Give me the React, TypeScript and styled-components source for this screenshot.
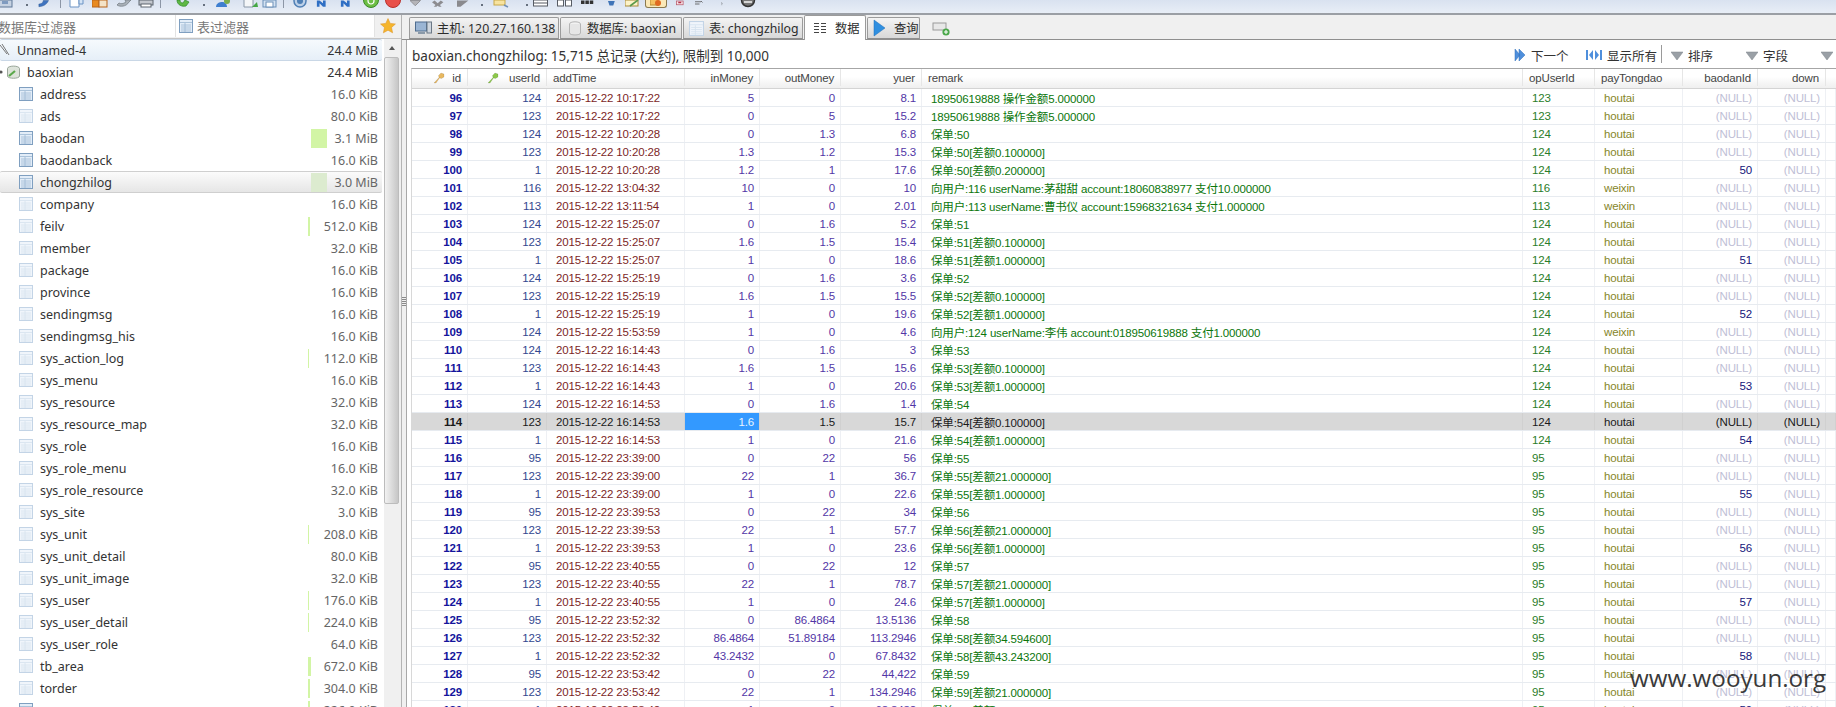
import React from "react";
import styled, { createGlobalStyle } from "styled-components";

const UI = `"Noto Sans", "Noto Sans CJK SC", sans-serif`;
const GRID = `"Liberation Sans", "Noto Sans CJK SC", sans-serif`;

const Global = createGlobalStyle`
  html, body { margin: 0; padding: 0; width: 1836px; height: 707px; overflow: hidden; background: #f0f0f0; }
  #root { width: 1836px; height: 707px; }
  * { box-sizing: border-box; }
`;

const Page = styled.div`
  position: relative;
  width: 1836px;
  height: 707px;
  overflow: hidden;
  display: flex;
  flex-direction: column;
  background: #f0f0f0;
  color: #333;
`;

/* ---------- toolbar ---------- */
const Toolbar = styled.div`
  flex: 0 0 15px;
  display: flex;
  align-items: flex-start;
  overflow: hidden;
  background: linear-gradient(#d9e2f0, #e8eef7);
  border-bottom: 2px solid #9b9fa5;
`;
const ToolSlot = styled.div<{ $gap: number; $w: number }>`
  flex: 0 0 ${(p) => p.$w}px;
  width: ${(p) => p.$w}px;
  margin-left: ${(p) => p.$gap}px;
  height: 8px;
  display: flex;
  align-items: flex-end;
  justify-content: center;
`;
const ToolSep = styled.div`
  width: 1px;
  height: 8px;
  background: #8c96a6;
`;
const ToolDot = styled.div`
  width: 2px;
  height: 2px;
  margin-bottom: 2px;
  background: #66707e;
`;
const ActiveTool = styled.div`
  width: 22px;
  height: 9px;
  display: flex;
  justify-content: center;
  align-items: flex-end;
  background: #fbe9b8;
  border: 1px solid #8a7a50;
  border-top: 0;
  border-radius: 0 0 3px 3px;
`;

type Kind =
  | "box" | "leaf" | "doc" | "book" | "arrows" | "print" | "swirl" | "people" | "docgo" | "save" | "ring"
  | "nav" | "green" | "red" | "check" | "x" | "garrow" | "yellow" | "tbl" | "split" | "small" | "blue"
  | "pencil" | "warn" | "ox" | "lines" | "q" | "dark";

const ToolGlyph = ({ kind }: { kind: Kind }) => {
  const p: Record<Kind, React.ReactNode> = {
    box: <><rect x="1" y="0" width="13" height="7" fill="#c6d2e2" stroke="#5f7898" /><rect x="4" y="1" width="6" height="3" fill="#7f9bc0" /></>,
    leaf: <path d="M1 7 C5 7 10 5 12 0 L6 0 C6 3 3 4 1 4 Z" fill="#3f74c0" stroke="#2a558f" strokeWidth=".5" />,
    doc: <><path d="M1 0 V7 H10 V0" fill="#fff" stroke="#6b93c4" /><path d="M10 0 V4 H14 V0" fill="#d3e3f5" stroke="#6b93c4" /></>,
    book: <><rect x="0" y="0" width="7" height="7" fill="#e88a20" stroke="#b8651a" /><rect x="7" y="0" width="8" height="7" fill="#f4e3c8" stroke="#b8651a" /></>,
    arrows: <path d="M1 5 C4 7 10 7 13 2 L15 0 H9 L10 2 C7 4 5 4 3 3 Z" fill="#a9b0b8" stroke="#707880" strokeWidth=".7" />,
    print: <><rect x="1" y="0" width="14" height="5" fill="#c3c7ce" stroke="#5d646e" /><rect x="3" y="4" width="10" height="3" fill="#fff" stroke="#5d646e" /></>,
    swirl: <path d="M1 0 C1 5 6 7 10 6 L13 2 L9 0 L7 3 C5 3 4 2 4 0 Z" fill="#5fb845" stroke="#2f8a2a" strokeWidth=".7" />,
    people: <><path d="M1 7 C1 3 5 2 7 2 C10 2 12 4 12 7 Z" fill="#3f7fd0" /><circle cx="12" cy="1" r="3" fill="#7cae4c" /></>,
    docgo: <><path d="M1 0 V7 H10 V0" fill="#f4f6f8" stroke="#8a98a8" /><path d="M9 7 L14 2 L15 7 Z" fill="#46a846" /></>,
    save: <><rect x="1" y="0" width="13" height="7" fill="#d4e2f2" stroke="#6b8fb8" /><rect x="4" y="2" width="7" height="5" fill="#fff" stroke="#6b8fb8" /></>,
    ring: <><circle cx="8" cy="1" r="6" fill="#bcd0e8" stroke="#4f7fb5" strokeWidth="1.5" /><circle cx="8" cy="1" r="3" fill="#4f7fb5" /></>,
    nav: <path d="M1 0 V7 H4 V3 L8 7 H11 V0 H8 V3 L4 0 Z" fill="#2f6fc4" />,
    green: <><circle cx="8" cy="0" r="7.5" fill="#6cbe45" stroke="#3b8a28" /><circle cx="8" cy="1" r="3" fill="none" stroke="#fff" strokeWidth="1.2" /></>,
    red: <circle cx="8" cy="0" r="7.5" fill="#e8504a" stroke="#b8302c" />,
    check: <path d="M0 0 H12 L6 6 Z" fill="#b4b4b8" stroke="#8c8c90" />,
    x: <path d="M0 2 L3 0 L6.5 3 L10 0 L13 2 L9 5 L11 7 H8 L6.5 6 L5 7 H2 L4 5 Z" fill="#8c8c90" />,
    garrow: <path d="M0 0 H13 L4 7 H0 Z" fill="#8a8a8e" />,
    yellow: <><rect x="1" y="0" width="11" height="5" fill="#f7e3a0" stroke="#c8a848" /><path d="M11 5 L15 7" stroke="#7090b8" strokeWidth="1.4" /></>,
    tbl: <><rect x=".5" y="0" width="14" height="6" fill="#fff" stroke="#565b63" /><path d="M1 3 H14" stroke="#565b63" /></>,
    split: <><rect x=".5" y="0" width="6" height="6" fill="#fff" stroke="#565b63" /><rect x="8.5" y="0" width="6" height="6" fill="#fff" stroke="#565b63" /></>,
    small: <><rect x="0" y="0" width="4" height="4" fill="#333" /><rect x="5" y="0" width="4" height="4" fill="#333" /><rect x="10" y="0" width="4" height="4" fill="#333" /></>,
    blue: <path d="M0 0 H9 L7 6 H2 Z" fill="#3f74b8" />,
    pencil: <><rect x="0" y="0" width="13" height="6" fill="#fdf3c8" stroke="#a88a3a" /><path d="M5 6 L13 0" stroke="#5a9a4a" strokeWidth="1.6" /></>,
    warn: <><rect x="1" y="0" width="8" height="5" fill="#f4c060" /><circle cx="10" cy="2" r="3" fill="#e06a20" /></>,
    ox: <><rect x=".5" y="0" width="9" height="5" fill="#f8e4e8" stroke="#b85a6a" /><rect x="3" y="1" width="4" height="2" fill="#b0304a" /></>,
    lines: <path d="M0 1 H8 M0 4 H6 M8 0 L10 2" stroke="#555" strokeWidth="1.1" fill="none" />,
    q: <path d="M1 0 C3 1 3 3 2 4 V5 M2 6 V7" stroke="#444" strokeWidth="1.4" fill="none" />,
    dark: <><circle cx="8" cy="0" r="6.5" fill="#777" stroke="#333" strokeWidth="1.5" /><path d="M4 2 L12 2" stroke="#fff" strokeWidth="1.4" /></>,
  };
  return <svg width="16" height="8" viewBox="0 0 16 8">{p[kind]}</svg>;
};

type ToolItem = { x: number; w: number; kind: Kind | "sep" | "dot" | "active" };
const tools: ToolItem[] = [
  { x: -2, w: 16, kind: "box" }, { x: 26, w: 2, kind: "dot" }, { x: 38, w: 14, kind: "leaf" }, { x: 60, w: 1, kind: "sep" },
  { x: 69, w: 16, kind: "doc" }, { x: 92, w: 16, kind: "book" }, { x: 116, w: 16, kind: "arrows" }, { x: 138, w: 16, kind: "print" },
  { x: 160, w: 1, kind: "sep" }, { x: 176, w: 16, kind: "swirl" }, { x: 203, w: 2, kind: "dot" }, { x: 215, w: 16, kind: "people" },
  { x: 243, w: 16, kind: "docgo" }, { x: 262, w: 16, kind: "save" }, { x: 283, w: 1, kind: "sep" }, { x: 292, w: 16, kind: "ring" },
  { x: 316, w: 14, kind: "nav" }, { x: 340, w: 14, kind: "nav" }, { x: 363, w: 16, kind: "green" }, { x: 385, w: 16, kind: "red" },
  { x: 410, w: 14, kind: "check" }, { x: 432, w: 14, kind: "x" }, { x: 457, w: 14, kind: "garrow" }, { x: 481, w: 2, kind: "dot" },
  { x: 493, w: 16, kind: "yellow" }, { x: 526, w: 2, kind: "dot" }, { x: 533, w: 16, kind: "tbl" }, { x: 557, w: 16, kind: "split" },
  { x: 581, w: 14, kind: "small" }, { x: 608, w: 12, kind: "blue" }, { x: 625, w: 16, kind: "pencil" }, { x: 645, w: 22, kind: "active" },
  { x: 676, w: 12, kind: "ox" }, { x: 695, w: 12, kind: "lines" }, { x: 721, w: 6, kind: "q" }, { x: 740, w: 16, kind: "dark" },
];

const ToolIcon = ({ kind }: { kind: ToolItem["kind"] }) => {
  if (kind === "sep") return <ToolSep />;
  if (kind === "dot") return <ToolDot />;
  if (kind === "active") return <ActiveTool><svg width="12" height="8" viewBox="0 0 12 8"><rect x="0" y="0" width="8" height="6" fill="#f4c060" stroke="#b88a30" /><circle cx="8" cy="4" r="3" fill="#e06a20" /></svg></ActiveTool>;
  return <ToolGlyph kind={kind} />;
};

/* ---------- shared icons ---------- */
const TableIcon = ({ open, size = 14 }: { open?: boolean; size?: number }) => {
  const line = open ? "#7f9fc0" : "#c3d4e6";
  const rule = open ? "#9db7d2" : "#d5e2ef";
  const fill = open ? "#e3edf8" : "#f0f5fb";
  return (
    <svg width={size} height={size} viewBox="0 0 14 14" style={{ flex: "none" }}>
      <rect x=".5" y=".5" width="13" height="13" fill={fill} stroke={line} />
      <path d="M1 3.5 H13 M2 6 H12 M2 8 H12 M2 10 H12 M2 12 H12 M6 4 V13" stroke={rule} strokeWidth=".8" fill="none" />
    </svg>
  );
};

const Star = () => (
  <svg width="16" height="16" viewBox="0 0 16 16">
    <path d="M8 .6 L10.2 5.4 L15.4 6 L11.5 9.5 L12.6 14.8 L8 12.2 L3.4 14.8 L4.5 9.5 L.6 6 L5.8 5.4 Z" fill="#f5b52c" stroke="#e0992a" strokeWidth=".6" />
  </svg>
);

const KeyIcon = ({ color }: { color: string }) => (
  <svg width="12" height="12" viewBox="0 0 12 12">
    <path d="M1 11 L6 5.5 L5.5 3.5 L8 1 L11 2 L11 5 L8.5 6.5 L6.5 6 L3 11 Z" fill={color} stroke="#00000030" strokeWidth=".5" />
  </svg>
);

/* ---------- main ---------- */
const Main = styled.div`
  flex: 1;
  min-height: 0;
  display: flex;
`;
const LeftPanel = styled.aside`
  flex: 0 0 401px;
  display: flex;
  flex-direction: column;
  border-right: 1px solid #b4b4b4;
  min-height: 0;
`;
const FilterBar = styled.div`
  flex: 0 0 22px;
  display: flex;
  font: 13px ${UI};
  color: #777;
`;
const FilterBox = styled.div<{ $w: number }>`
  flex: 0 0 ${(p) => p.$w}px;
  display: flex;
  align-items: center;
  gap: 4px;
  padding-left: 3px;
  background: #fff;
  overflow: hidden;
  border-right: 1px solid #e3e3e3;
`;
const FilterCut = styled.span`
  margin-left: -5px;
  white-space: nowrap;
`;
const StarBox = styled.div`
  flex: 1;
  display: flex;
  align-items: center;
  padding-left: 5px;
`;
const TreeArea = styled.div`
  flex: 1;
  min-height: 0;
  display: flex;
  margin-top: 1px;
  padding-right: 2px;
  border-top: 1px solid #c4c4c4;
`;
const Tree = styled.div`
  flex: 0 0 384px;
  background: #fff;
  overflow: hidden;
  padding-right: 2px;
`;
const TreeRow = styled.div<{ $state?: "conn" | "sel"; $indent: number }>`
  height: 22px;
  display: flex;
  align-items: center;
  padding: 0 4px 0 ${(p) => p.$indent}px;
  font: 12.5px ${UI};
  color: #333;
  border: 1px solid transparent;
  border-width: 1px 0;
  border-radius: 2px;
  ${(p) => p.$state === "conn" && `background: linear-gradient(#f6fafd, #e6eff8); border-color: #c9d7e6;`}
  ${(p) => p.$state === "sel" && `background: linear-gradient(#fbfbfb, #e6e6e6); border-color: #cfcfcf;`}
`;
const TreeName = styled.span`
  flex: 1;
  margin-left: 7px;
  white-space: nowrap;
`;
const BarSlot = styled.div`
  flex: 0 0 16px;
  height: 19px;
  display: flex;
`;
const Bar = styled.div<{ $pale?: boolean }>`
  height: 100%;
  background: ${(p) => (p.$pale ? "#dcebcf" : "#d2f5a5")};
`;
const SizeText = styled.span<{ $dark?: boolean }>`
  flex: 0 0 51px;
  text-align: right;
  white-space: nowrap;
  color: ${(p) => (p.$dark ? "#333" : "#666")};
`;
const Scrollbar = styled.div`
  flex: 0 0 15px;
  display: flex;
  flex-direction: column;
  background: #f0f0f0;
`;
const ScrollUp = styled.div`
  flex: 0 0 18px;
  display: flex;
  align-items: center;
  justify-content: center;
  &::before {
    content: "";
    border: 3px solid transparent;
    border-bottom: 4px solid #555;
    border-top: 0;
  }
`;
const ScrollThumb = styled.div`
  flex: 0 0 447px;
  background: linear-gradient(90deg, #f2f2f2, #dcdcdc 50%, #c6c6c6);
  border: 1px solid #bcbcbc;
  border-radius: 2px;
`;
const Splitter = styled.div`
  flex: 0 0 4px;
  display: flex;
  align-items: center;
  justify-content: center;
  padding-bottom: 120px;
  &::before {
    content: "";
    width: 4px;
    height: 9px;
    background: repeating-linear-gradient(#8a8a8a 0 1px, #f0f0f0 1px 2px);
  }
`;

const RightPanel = styled.main`
  flex: 1;
  min-width: 0;
  display: flex;
  flex-direction: column;
  border-left: 1px solid #a8a8a8;
`;
const TabBar = styled.div`
  flex: 0 0 25px;
  display: flex;
  align-items: flex-end;
  gap: 1px;
  margin-left: -5px;
  padding-left: 7px;
  background: #f0f0f0;
  border-bottom: 1px solid #8f8f8f;
  position: relative;
  z-index: 1;
`;
const Tab = styled.div<{ $active?: boolean; $w: number }>`
  flex: 0 0 ${(p) => p.$w}px;
  min-width: 0;
  overflow: hidden;
  height: ${(p) => (p.$active ? "25px" : "22px")};
  margin-bottom: ${(p) => (p.$active ? "-1px" : "0")};
  display: flex;
  align-items: center;
  gap: 5px;
  padding-left: 5px;
  font: 12.3px ${UI};
  color: #2c2c2c;
  white-space: nowrap;
  border: 1px solid #9b9b9b;
  border-bottom: ${(p) => (p.$active ? "0" : "1px solid #8f8f8f")};
  border-radius: 2px 2px 0 0;
  background: ${(p) => (p.$active ? "#fff" : "linear-gradient(#f4f4f4, #d8d8d8)")};
`;
const AddTab = styled.div`
  margin-left: 11px;
  align-self: center;
  margin-top: 4px;
  display: flex;
`;
const Body = styled.div`
  flex: 1;
  min-height: 0;
  display: flex;
  flex-direction: column;
  background: #fff;
  padding-left: 4px;
`;
const InfoRow = styled.div`
  flex: 0 0 28px;
  display: flex;
  align-items: center;
  font: 13.5px ${UI};
  color: #333;
  white-space: nowrap;
  padding-left: 1px;
`;
const InfoText = styled.span`
  flex: 1;
  padding-top: 2px;
`;
const Actions = styled.div`
  display: flex;
  align-items: center;
  font-size: 12.5px;
  height: 100%;
`;
const Action = styled.div<{ $w: number }>`
  flex: 0 0 ${(p) => p.$w}px;
  display: flex;
  align-items: center;
  gap: 5px;
  padding-top: 2px;
`;
const ActionSep = styled.div`
  width: 1px;
  height: 18px;
  background: #9a9a9a;
  margin: 0 9px 0 0;
`;

const NextIcon = () => (
  <svg width="12" height="14" viewBox="0 0 12 14"><path d="M1 1 L6 7 L1 13 Z M5 1 L11 7 L5 13 Z" fill="#4f8fdc" stroke="#2f6fb8" strokeWidth=".5" /></svg>
);
const AllIcon = () => (
  <svg width="16" height="12" viewBox="0 0 16 12"><path d="M0 1 H2 V11 H0 Z M7 1 L3 6 L7 11 Z M9 1 L13 6 L9 11 Z M14 1 H16 V11 H14 Z" fill="#4f8fdc" /></svg>
);
const DropIcon = () => (
  <svg width="12" height="9" viewBox="0 0 12 9"><path d="M0 1 H12 L6 9 Z" fill="#9aa0a6" stroke="#7f858b" strokeWidth=".5" /></svg>
);

const cols = "57px 79px 138px 75px 81px 81px 601px 72px 88px 75px 68px 1fr";
const Table = styled.div`
  flex: 1;
  min-height: 0;
  overflow: hidden;
  border-top: 1px solid #a6a6a6;
  border-left: 1px solid #d8d8d8;
  font: 11.5px ${GRID};
  letter-spacing: -0.15px;
`;
const HeadRow = styled.div`
  display: grid;
  grid-template-columns: ${cols};
  height: 20px;
  background: linear-gradient(#fff, #fff 40%, #efefef);
  border-bottom: 1px solid #d4d4d4;
  margin-left: -1px;
  padding-bottom: 2px;
`;
const HeadCell = styled.div<{ $right?: boolean }>`
  display: flex;
  align-items: center;
  justify-content: ${(p) => (p.$right ? "flex-end" : "flex-start")};
  gap: 7px;
  padding: 0 6px;
  color: #444;
  border-right: 1px solid #e6e6e6;
  white-space: nowrap;
`;
const HeadKey = styled.span`
  display: flex;
  margin-right: 3px;
`;
const Row = styled.div<{ $sel?: boolean }>`
  display: grid;
  grid-template-columns: ${cols};
  height: 18px;
  margin-left: -1px;
  border-bottom: 1px solid #e7ebf0;
  background: ${(p) => (p.$sel ? "#d8d8d8" : "#fff")};
`;
type Tone = "id" | "user" | "date" | "num" | "text" | "op" | "pay" | "ref" | "null";
const toneColor: Record<Tone, string> = {
  id: "#14149c",
  user: "#33478f",
  date: "#7c1f1f",
  num: "#5236a6",
  text: "#0b760b",
  op: "#2a7d2a",
  pay: "#86862a",
  ref: "#14147a",
  null: "#c0c0d6",
};
const Cell = styled.div<{ $tone: Tone; $sel?: boolean; $focus?: boolean; $right?: boolean }>`
  display: flex;
  align-items: center;
  justify-content: ${(p) => (p.$right ? "flex-end" : "flex-start")};
  padding: ${(p) => (p.$right ? "0 5px 0 0" : "0 0 0 9px")};
  border-right: 1px solid ${(p) => (p.$sel ? "#d0d0d0" : "#eef0f4")};
  white-space: nowrap;
  overflow: hidden;
  font-weight: ${(p) => (p.$tone === "id" ? 700 : 400)};
  color: ${(p) => (p.$focus ? "#e8f4ff" : p.$sel ? "#1a1a1a" : toneColor[p.$tone])};
  background: ${(p) => (p.$focus ? "#3399ff" : "transparent")};
`;

const Watermark = styled.div`
  position: absolute;
  left: 1630px;
  top: 663px;
  font: 24.2px "Open Sans", sans-serif;
  line-height: 30px;
  color: #3a3a3a;
  white-space: nowrap;
`;

/* ---------- data ---------- */
const treeRows: [string, string, number?, boolean?][] = [
  ["address", "16.0 KiB", 0, true], ["ads", "80.0 KiB"], ["baodan", "3.1 MiB", 16, true], ["baodanback", "16.0 KiB", 0, true],
  ["chongzhilog", "3.0 MiB", 16, true], ["company", "16.0 KiB"], ["feilv", "512.0 KiB", 2], ["member", "32.0 KiB"],
  ["package", "16.0 KiB"], ["province", "16.0 KiB"], ["sendingmsg", "16.0 KiB"], ["sendingmsg_his", "16.0 KiB"],
  ["sys_action_log", "112.0 KiB", 1], ["sys_menu", "16.0 KiB"], ["sys_resource", "32.0 KiB"], ["sys_resource_map", "32.0 KiB"],
  ["sys_role", "16.0 KiB"], ["sys_role_menu", "16.0 KiB"], ["sys_role_resource", "32.0 KiB"], ["sys_site", "3.0 KiB"],
  ["sys_unit", "208.0 KiB", 1], ["sys_unit_detail", "80.0 KiB"], ["sys_unit_image", "32.0 KiB"], ["sys_user", "176.0 KiB", 1],
  ["sys_user_detail", "224.0 KiB", 1], ["sys_user_role", "64.0 KiB"], ["tb_area", "672.0 KiB", 3], ["torder", "304.0 KiB", 2],
  ["", "326.0 KiB", 2, true],
];

const D = "2015-12-22 ";
const pay = (n: number, d: string) => `保单:${n}[差额${d}]`;
type R = [number, number, string, string, string, string, string, number, string, number | null];
const rows: R[] = [
  [96, 124, "10:17:22", "5", "0", "8.1", "18950619888 操作金额5.000000", 123, "houtai", null],
  [97, 123, "10:17:22", "0", "5", "15.2", "18950619888 操作金额5.000000", 123, "houtai", null],
  [98, 124, "10:20:28", "0", "1.3", "6.8", "保单:50", 124, "houtai", null],
  [99, 123, "10:20:28", "1.3", "1.2", "15.3", pay(50, "0.100000"), 124, "houtai", null],
  [100, 1, "10:20:28", "1.2", "1", "17.6", pay(50, "0.200000"), 124, "houtai", 50],
  [101, 116, "13:04:32", "10", "0", "10", "向用户:116 userName:茅甜甜 account:18060838977 支付10.000000", 116, "weixin", null],
  [102, 113, "13:11:54", "1", "0", "2.01", "向用户:113 userName:曹书仪 account:15968321634 支付1.000000", 113, "weixin", null],
  [103, 124, "15:25:07", "0", "1.6", "5.2", "保单:51", 124, "houtai", null],
  [104, 123, "15:25:07", "1.6", "1.5", "15.4", pay(51, "0.100000"), 124, "houtai", null],
  [105, 1, "15:25:07", "1", "0", "18.6", pay(51, "1.000000"), 124, "houtai", 51],
  [106, 124, "15:25:19", "0", "1.6", "3.6", "保单:52", 124, "houtai", null],
  [107, 123, "15:25:19", "1.6", "1.5", "15.5", pay(52, "0.100000"), 124, "houtai", null],
  [108, 1, "15:25:19", "1", "0", "19.6", pay(52, "1.000000"), 124, "houtai", 52],
  [109, 124, "15:53:59", "1", "0", "4.6", "向用户:124 userName:李伟 account:018950619888 支付1.000000", 124, "weixin", null],
  [110, 124, "16:14:43", "0", "1.6", "3", "保单:53", 124, "houtai", null],
  [111, 123, "16:14:43", "1.6", "1.5", "15.6", pay(53, "0.100000"), 124, "houtai", null],
  [112, 1, "16:14:43", "1", "0", "20.6", pay(53, "1.000000"), 124, "houtai", 53],
  [113, 124, "16:14:53", "0", "1.6", "1.4", "保单:54", 124, "houtai", null],
  [114, 123, "16:14:53", "1.6", "1.5", "15.7", pay(54, "0.100000"), 124, "houtai", null],
  [115, 1, "16:14:53", "1", "0", "21.6", pay(54, "1.000000"), 124, "houtai", 54],
  [116, 95, "23:39:00", "0", "22", "56", "保单:55", 95, "houtai", null],
  [117, 123, "23:39:00", "22", "1", "36.7", pay(55, "21.000000"), 95, "houtai", null],
  [118, 1, "23:39:00", "1", "0", "22.6", pay(55, "1.000000"), 95, "houtai", 55],
  [119, 95, "23:39:53", "0", "22", "34", "保单:56", 95, "houtai", null],
  [120, 123, "23:39:53", "22", "1", "57.7", pay(56, "21.000000"), 95, "houtai", null],
  [121, 1, "23:39:53", "1", "0", "23.6", pay(56, "1.000000"), 95, "houtai", 56],
  [122, 95, "23:40:55", "0", "22", "12", "保单:57", 95, "houtai", null],
  [123, 123, "23:40:55", "22", "1", "78.7", pay(57, "21.000000"), 95, "houtai", null],
  [124, 1, "23:40:55", "1", "0", "24.6", pay(57, "1.000000"), 95, "houtai", 57],
  [125, 95, "23:52:32", "0", "86.4864", "13.5136", "保单:58", 95, "houtai", null],
  [126, 123, "23:52:32", "86.4864", "51.89184", "113.2946", pay(58, "34.594600"), 95, "houtai", null],
  [127, 1, "23:52:32", "43.2432", "0", "67.8432", pay(58, "43.243200"), 95, "houtai", 58],
  [128, 95, "23:53:42", "0", "22", "44,422", "保单:59", 95, "houtai", null],
  [129, 123, "23:53:42", "22", "1", "134.2946", pay(59, "21.000000"), 95, "houtai", null],
  [130, 1, "23:53:42", "1", "0", "68.8432", pay(59, "1.000000"), 95, "houtai", 59],
];

let toolEnd = 0;
const toolGaps = tools.map((t) => {
  const gap = t.x - toolEnd;
  toolEnd = t.x + t.w;
  return gap;
});

export default function App() {
  return (
    <Page>
      <Global />
      <Toolbar>
        {tools.map((t, i) => (
          <ToolSlot key={i} $gap={toolGaps[i]} $w={t.w}>
            <ToolIcon kind={t.kind} />
          </ToolSlot>
        ))}
      </Toolbar>
      <Main>
        <LeftPanel>
          <FilterBar>
            <FilterBox $w={176}><FilterCut>数据库过滤器</FilterCut></FilterBox>
            <FilterBox $w={199}><TableIcon open /> 表过滤器</FilterBox>
            <StarBox><Star /></StarBox>
          </FilterBar>
          <TreeArea>
            <Tree>
              <TreeRow $state="conn" $indent={0}>
                <svg width="10" height="14" viewBox="0 0 10 14"><path d="M0 2 L7 11 M2 1 L9 12" stroke="#777" strokeWidth="1" /></svg>
                <TreeName>Unnamed-4</TreeName>
                <SizeText $dark>24.4 MiB</SizeText>
              </TreeRow>
              <TreeRow $indent={0}>
                <svg width="20" height="14" viewBox="0 0 20 14">
                  <circle cx="1" cy="7" r="1.6" fill="#555" />
                  <ellipse cx="13.5" cy="3.5" rx="6" ry="2.4" fill="#dfe5dc" stroke="#9aa69a" />
                  <path d="M7.5 3.5 V11 C7.5 14 19.5 14 19.5 11 V3.5" fill="#dde3da" stroke="#9aa69a" />
                  <path d="M9 11 L15 6" stroke="#5aa84a" strokeWidth="2.2" />
                </svg>
                <TreeName>baoxian</TreeName>
                <SizeText $dark>24.4 MiB</SizeText>
              </TreeRow>
              {treeRows.map(([name, size, bar, open]) => {
                const sel = name === "chongzhilog";
                return (
                  <TreeRow key={size + name} $indent={19} $state={sel ? "sel" : undefined}>
                    <TableIcon open={open} />
                    <TreeName>{name}</TreeName>
                    <BarSlot>{bar ? <Bar $pale={sel} style={{ width: bar }} /> : null}</BarSlot>
                    <SizeText>{size}</SizeText>
                  </TreeRow>
                );
              })}
            </Tree>
            <Scrollbar>
              <ScrollUp />
              <ScrollThumb />
            </Scrollbar>
          </TreeArea>
        </LeftPanel>
        <Splitter />
        <RightPanel>
          <TabBar>
            <Tab $w={150}>
              <svg width="17" height="15" viewBox="0 0 17 15"><rect x=".5" y="1" width="11" height="9" fill="#9ab5d4" stroke="#4f6d8f" /><rect x="12" y="1" width="4.5" height="11" fill="#cfd6de" stroke="#6b7886" /><rect x="3" y="11" width="7" height="2" fill="#8a99a8" /></svg>
              主机: 120.27.160.138
            </Tab>
            <Tab $w={122}>
              <svg width="14" height="15" viewBox="0 0 14 15" style={{ marginLeft: 2 }}><ellipse cx="7" cy="3" rx="5.5" ry="2.2" fill="#f2f2f2" stroke="#b4b4b4" /><path d="M1.5 3 V12 C1.5 14.6 12.5 14.6 12.5 12 V3" fill="#e6e6e6" stroke="#b4b4b4" /></svg>
              数据库: baoxian
            </Tab>
            <Tab $w={120}>
              <TableIcon size={15} />
              表: chongzhilog
            </Tab>
            <Tab $active $w={62}>
              <svg width="12" height="12" viewBox="0 0 12 12" style={{ marginLeft: 4, marginRight: 4 }}><path d="M0 1.5 H5 M7 1.5 H12 M0 4.5 H5 M7 4.5 H12 M0 7.5 H5 M7 7.5 H12 M0 10.5 H5 M7 10.5 H12" stroke="#444" strokeWidth="1" /></svg>
              数据
            </Tab>
            <Tab $w={53}>
              <svg width="13" height="18" viewBox="0 0 13 18" style={{ marginRight: 3 }}><path d="M1 1 L12 9 L1 17 Z" fill="#2f8fe0" stroke="#1f6fb8" strokeWidth=".5" /></svg>
              查询
            </Tab>
            <AddTab>
              <svg width="18" height="14" viewBox="0 0 18 14"><rect x="1" y="1" width="13" height="7" fill="#e8e8e8" stroke="#9a9a9a" /><circle cx="14" cy="10" r="3.6" fill="#4aa84a" /><path d="M14 8 V12 M12 10 H16" stroke="#fff" strokeWidth="1.1" /></svg>
            </AddTab>
          </TabBar>
          <Body>
            <InfoRow>
              <InfoText>baoxian.chongzhilog: 15,715 总记录 (大约), 限制到 10,000</InfoText>
              <Actions>
                <Action $w={72}><NextIcon /> 下一个</Action>
                <Action $w={75}><AllIcon /> 显示所有</Action>
                <ActionSep />
                <Action $w={75}><DropIcon /> 排序</Action>
                <Action $w={75}><DropIcon /> 字段</Action>
                <Action $w={15}><DropIcon /></Action>
              </Actions>
            </InfoRow>
            <Table>
              <HeadRow>
                <HeadCell $right><KeyIcon color="#e8b860" /> id</HeadCell>
                <HeadCell $right><HeadKey><KeyIcon color="#8cc84a" /></HeadKey> userId</HeadCell>
                <HeadCell>addTime</HeadCell>
                <HeadCell $right>inMoney</HeadCell>
                <HeadCell $right>outMoney</HeadCell>
                <HeadCell $right>yuer</HeadCell>
                <HeadCell>remark</HeadCell>
                <HeadCell>opUserId</HeadCell>
                <HeadCell>payTongdao</HeadCell>
                <HeadCell $right>baodanId</HeadCell>
                <HeadCell $right>down</HeadCell>
                <HeadCell />
              </HeadRow>
              {rows.map((r) => {
                const sel = r[0] === 114;
                return (
                  <Row key={r[0]} $sel={sel}>
                    <Cell $right $sel={sel} $tone="id">{r[0]}</Cell>
                    <Cell $right $sel={sel} $tone="user">{r[1]}</Cell>
                    <Cell $sel={sel} $tone="date">{D + r[2]}</Cell>
                    <Cell $right $sel={sel} $focus={sel} $tone="num">{r[3]}</Cell>
                    <Cell $right $sel={sel} $tone="num">{r[4]}</Cell>
                    <Cell $right $sel={sel} $tone="num">{r[5]}</Cell>
                    <Cell $sel={sel} $tone="text">{r[6]}</Cell>
                    <Cell $sel={sel} $tone="op">{r[7]}</Cell>
                    <Cell $sel={sel} $tone="pay">{r[8]}</Cell>
                    <Cell $right $sel={sel} $tone={r[9] === null ? "null" : "ref"}>{r[9] === null ? "(NULL)" : r[9]}</Cell>
                    <Cell $right $sel={sel} $tone="null">(NULL)</Cell>
                    <Cell $sel={sel} $tone="null" />
                  </Row>
                );
              })}
            </Table>
          </Body>
        </RightPanel>
      </Main>
      <Watermark>www.wooyun.org</Watermark>
    </Page>
  );
}
